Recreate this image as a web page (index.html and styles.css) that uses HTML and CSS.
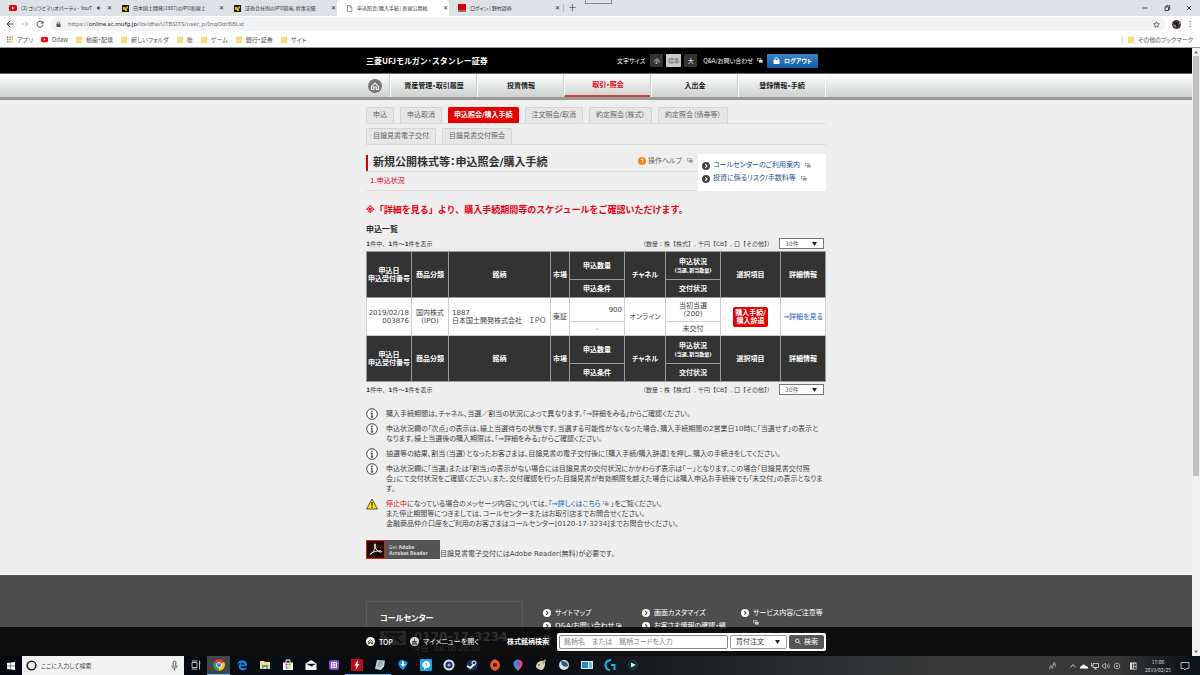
FILE: index.html
```html
<!DOCTYPE html>
<html lang="ja">
<head>
<meta charset="utf-8">
<title>申込照会/購入手続 | 新規公開株式等</title>
<link rel="stylesheet" href="styles.css">
</head>
<body>
<svg class="defs" aria-hidden="true">
  <symbol id="yt" viewBox="0 0 8 6"><rect width="8" height="6" rx="1.6" fill="#e00"/><path d="M3 1.6v2.8L5.5 3z" fill="#fff"/></symbol>
  <symbol id="fav" viewBox="0 0 7 7"><rect width="7" height="7" fill="#181800"/><path d="M1 2h2l.5 1L5 1.5h1V3L4.500 4l.8 2H3.500L2.500 4.500 1 5.500z" fill="#d8d000"/></symbol>
  <symbol id="folder" viewBox="0 0 6 7"><path d="M0 .5h5.500V2H6v5H0z" fill="#f7dc83"/><path d="M5 .5h.7v3H5z" fill="#e8c35d"/></symbol>
  <symbol id="pop" viewBox="0 0 6 5"><rect x=".3" y=".3" width="3.600" height="2.600" fill="none" stroke="currentColor" stroke-width=".6"/><rect x="2" y="1.800" width="3.600" height="2.800" fill="currentColor"/></symbol>
  <symbol id="house" viewBox="0 0 14 14"><circle cx="7" cy="7" r="7" fill="currentColor"/><path d="M3.500 7.500 7 4l3.500 3.500V10.500H8.300V8H5.700v2.500H3.500z" fill="none" stroke="var(--cut)" stroke-width="1.200"/></symbol>
  <symbol id="arrow" viewBox="0 0 8 8"><circle cx="4" cy="4" r="4" fill="currentColor"/><path d="M3.200 2.200 5 4 3.200 5.800" fill="none" stroke="var(--cut)" stroke-width="1.100"/></symbol>
  <symbol id="info" viewBox="0 0 12 12"><circle cx="6" cy="6" r="5.300" fill="#fff" stroke="#333" stroke-width=".9"/><path d="M6 5v4M4.900 5.200H6M4.800 9h2.400" stroke="#222" fill="none"/><circle cx="6" cy="3.200" r=".8" fill="#222"/></symbol>
</svg>

<header class="browser">
  <div class="tabs">
    <div class="tab"><svg class="ic8"><use href="#yt"/></svg><span class="tab-title">(2) ゴリラとマリオパーティ - YouT</span><svg class="ic5" viewBox="0 0 5 5"><path d="M0 1.500h1L2.500 0v5L1 3.500H0zM3.500 1.200q1 1.300 0 2.600" fill="#555"/></svg><button class="x" aria-label="閉じる">✕</button></div>
    <div class="tab"><svg class="ic7"><use href="#fav"/></svg><span class="tab-title">日本国土開発(1887)のIPO新規上</span><button class="x" aria-label="閉じる">✕</button></div>
    <div class="tab"><svg class="ic7"><use href="#fav"/></svg><span class="tab-title">証券会社別のIPO割当、幹事実績</span><button class="x" aria-label="閉じる">✕</button></div>
    <div class="tab current"><svg class="ic7" viewBox="0 0 7 7"><path d="M1.500.5h2.700L5.800 2v4.600H1.500zM4 .5v1.700h1.800" fill="#fff" stroke="#555" stroke-width=".6"/></svg><span class="tab-title">申込照会/購入手続 | 新規公開株</span><button class="x" aria-label="閉じる">✕</button></div>
    <div class="tab last"><svg class="ic8" viewBox="0 0 8 8"><path d="M0 0h8v6H0z" fill="#d00000"/><path d="M0 6h8v2H0z" fill="#8c7770"/></svg><span class="tab-title">ログイン | 野村證券</span><button class="x" aria-label="閉じる">✕</button></div>
    <button class="plus" aria-label="新しいタブ">＋</button>
    <i class="handle"></i>
    <div class="win">
      <svg viewBox="0 0 8 8"><path d="M1.500 4h5" stroke="#222" stroke-width=".8"/></svg>
      <svg viewBox="0 0 8 8"><path d="M2 3h3.500v3.500H2zM3.200 3V1.700h3.500v3.600H5.500" fill="none" stroke="#222" stroke-width=".8"/></svg>
      <svg viewBox="0 0 8 8"><path d="m2 2 4 4M6 2 2 6" stroke="#222" stroke-width=".8"/></svg>
    </div>
  </div>
  <div class="toolbar">
    <svg class="nav-ic" viewBox="0 0 8 8"><path d="M7.500 4H1M4 1 1 4l3 3" fill="none" stroke="#444"/></svg>
    <svg class="nav-ic" viewBox="0 0 8 8"><path d="M.5 4H7M4 1l3 3-3 3" fill="none" stroke="#bbb"/></svg>
    <svg class="nav-ic" viewBox="0 0 8 8"><path d="M6.500 2.500A3 3 0 1 0 7 4.500" fill="none" stroke="#444"/><path d="M7.400.7v2.800H4.600z" fill="#444"/></svg>
    <div class="address">
      <svg class="ic5" viewBox="0 0 5 6"><path d="M.5 2.500h4V6h-4z" fill="#555"/><path d="M1.400 2.500V1.300q1.100-1.300 2.200 0v1.200" fill="none" stroke="#555" stroke-width=".7"/></svg>
      <span>https://<b>online.sc.mufg.jp</b>/its/dfw/UTBSITS/user_p/InqOdrBBLst</span>
      <svg class="ic7 star" viewBox="0 0 8 8"><path d="m4 .8.9 2.200 2.400.2-1.800 1.600.5 2.400-2-1.300-2 1.300.5-2.400L.7 3.200l2.400-.2z" fill="none" stroke="#444" stroke-width=".8"/></svg>
    </div>
    <svg class="avatar" viewBox="0 0 8 8"><circle cx="4" cy="4" r="4" fill="#4a3f49"/><path d="M1 2h5l1 1-2 .5L6 6H3z" fill="#201c24"/><path d="m1 5 2-1 .5 2zM6 1l1.500 2-1 .5z" fill="#b9aeb9"/></svg>
    <svg class="dots" viewBox="0 0 4 8"><path d="M1.500 1h1v1h-1zM1.500 3.500h1v1h-1zM1.500 6h1v1h-1z" fill="#555"/></svg>
  </div>
  <nav class="bookmarks">
    <a href="#"><svg class="ic6" viewBox="0 0 6 6"><path d="M0 0h1.400v1.400H0z" fill="#e44"/><path d="M2.300 0h1.400v1.400H2.300zM4.600 0H6v1.400H4.600z" fill="#e66"/><path d="M0 2.300h1.400v1.400H0zM0 4.600h1.400V6H0z" fill="#4a5"/><path d="M2.300 2.300h1.400v1.400H2.300z" fill="#48d"/><path d="M4.600 2.300H6v1.400H4.600zM2.300 4.600h1.400V6H2.300zM4.600 4.600H6V6H4.600z" fill="#eb3"/></svg>アプリ</a>
    <a href="#"><svg class="ic7"><use href="#yt"/></svg>Ddaw</a>
    <a href="#"><svg class="ic6"><use href="#folder"/></svg>動画・配信</a>
    <a href="#"><svg class="ic6"><use href="#folder"/></svg>新しいフォルダ</a>
    <a href="#"><svg class="ic6"><use href="#folder"/></svg>後</a>
    <a href="#"><svg class="ic6"><use href="#folder"/></svg>ゲーム</a>
    <a href="#"><svg class="ic6"><use href="#folder"/></svg>銀行・証券</a>
    <a href="#"><svg class="ic6"><use href="#folder"/></svg>サイト</a>
    <a href="#" class="others"><svg class="ic6"><use href="#folder"/></svg>その他のブックマーク</a>
  </nav>
</header>

<div class="viewport">
  <div class="page">
    <div class="masthead"><div class="wrap mast-row">
      <div class="brand">三菱UFJモルガン･スタンレー証券</div>
      <span class="size-label">文字サイズ</span>
      <button class="size">小</button><button class="size on">標準</button><button class="size">大</button>
      <a class="qa" href="#">Q&amp;A/お問い合わせ<svg class="pop"><use href="#pop"/></svg></a>
      <button class="logout"><svg class="ic7" viewBox="0 0 6 7"><path d="M0 3h6v4H0z" fill="#fff"/><path d="M1.300 3V1.700q1.700-2 3.400 0V3" fill="none" stroke="#fff"/></svg>ログアウト</button>
    </div></div>
    <nav class="gnav"><div class="wrap gnav-row">
      <a class="home" href="#" aria-label="ホーム"><svg><use href="#house"/></svg></a>
      <a href="#">資産管理・取引履歴</a><a href="#">投資情報</a><a href="#" class="on">取引・照会</a><a href="#">入出金</a><a href="#">登録情報・手続</a>
    </div></nav>

    <main class="wrap">
      <nav class="subtabs"><a href="#">申込</a><a href="#">申込取消</a><a href="#" class="on">申込照会/購入手続</a><a href="#">注文照会/取消</a><a href="#">約定照会（株式）</a><a href="#">約定照会（債券等）</a></nav>
      <nav class="subtabs"><a href="#">目論見書電子交付</a><a href="#">目論見書交付照会</a></nav>

      <div class="top">
        <div class="heading">
          <div class="title-row"><h1>新規公開株式等：申込照会/購入手続</h1>
            <a class="help" href="#"><svg class="ic8" viewBox="0 0 8 8"><circle cx="4" cy="4" r="4" fill="#f08519"/><path d="M2.800 3q.2-1.200 1.300-1.100T5.200 3.100Q5 3.800 4.100 4.300v.6M4.100 5.600v.8" fill="none" stroke="#fff" stroke-width=".8"/></svg>操作ヘルプ<svg class="pop"><use href="#pop"/></svg></a></div>
          <div class="step">1.申込状況</div>
        </div>
        <div class="side">
          <a href="#"><svg class="ic8"><use href="#arrow"/></svg>コールセンターのご利用案内<svg class="pop"><use href="#pop"/></svg></a>
          <a href="#"><svg class="ic8"><use href="#arrow"/></svg>投資に係るリスク/手数料等<svg class="pop"><use href="#pop"/></svg></a>
        </div>
      </div>

      <p class="notice">※「詳細を見る」より、購入手続期間等のスケジュールをご確認いただけます。</p>
      <h2>申込一覧</h2>
      <div class="pager"><span><b>1</b>件中、<b>1</b>件～<b>1</b>件を表示</span><label for="n1">（数量：株【株式】, 千円【CB】, 口【その他】）</label><select id="n1"><option>30件</option></select></div>
      <table>
        <colgroup><col class="c45"><col class="c37"><col class="c102"><col class="c19"><col class="c55"><col class="c41"><col class="c55"><col class="c60"><col class="c45"></colgroup>
        <thead>
          <tr class="h1r"><th rowspan="2">申込日<br>申込受付番号</th><th rowspan="2">商品分類</th><th rowspan="2">銘柄</th><th rowspan="2">市場</th><th>申込数量</th><th rowspan="2">チャネル</th><th>申込状況<br><small>(当選、割当数量)</small></th><th rowspan="2">選択項目</th><th rowspan="2">詳細情報</th></tr>
          <tr class="h2r"><th>申込条件</th><th>交付状況</th></tr>
        </thead>
        <tbody>
          <tr class="d1r"><td rowspan="2" class="r">2019/02/18<br>003876</td><td rowspan="2">国内株式<br>(IPO)</td><td rowspan="2" class="l">1887<br>日本国土開発株式会社　ＩＰＯ</td><td rowspan="2">東証</td><td class="r">900</td><td rowspan="2">オンライン</td><td>当初当選<br>(200)</td><td rowspan="2"><button class="buy">購入手続/<br>購入辞退</button></td><td rowspan="2"><a href="#">⇒詳細を見る</a></td></tr>
          <tr class="d2r"><td>-</td><td>未交付</td></tr>
        </tbody>
        <tbody>
          <tr class="h1r"><th rowspan="2">申込日<br>申込受付番号</th><th rowspan="2">商品分類</th><th rowspan="2">銘柄</th><th rowspan="2">市場</th><th>申込数量</th><th rowspan="2">チャネル</th><th>申込状況<br><small>(当選、割当数量)</small></th><th rowspan="2">選択項目</th><th rowspan="2">詳細情報</th></tr>
          <tr class="h2r"><th>申込条件</th><th>交付状況</th></tr>
        </tbody>
      </table>
      <div class="pager"><span><b>1</b>件中、<b>1</b>件～<b>1</b>件を表示</span><label for="n2">（数量：株【株式】, 千円【CB】, 口【その他】）</label><select id="n2"><option>30件</option></select></div>

      <ul class="notes">
        <li><svg><use href="#info"/></svg><p>購入手続期間は、チャネル、当選／割当の状況によって異なります。「⇒詳細をみる」からご確認ください。</p></li>
        <li><svg><use href="#info"/></svg><p>申込状況欄の「次点」の表示は、繰上当選待ちの状態です。当選する可能性がなくなった場合、購入手続期間の2営業日10時に「当選せず」の表示と<br>なります。繰上当選後の購入期限は、「⇒詳細をみる」からご確認ください。</p></li>
        <li><svg><use href="#info"/></svg><p>抽選等の結果、割当（当選）となったお客さまは、目論見書の電子交付後に［購入手続/購入辞退］を押し、購入の手続きをしてください。</p></li>
        <li><svg><use href="#info"/></svg><p>申込状況欄に「当選」または「割当」の表示がない場合には目論見書の交付状況にかかわらず表示は「－」となります。この場合「目論見書交付照<br>会」にて交付状況をご確認ください。また、交付確認を行った目論見書が有効期限を越えた場合には購入申込お手続後でも「未交付」の表示となりま<br>す。</p></li>
        <li><svg viewBox="0 0 12 12"><path d="M6 1 11.500 11H.5z" fill="#fd0" stroke="#333" stroke-width=".8"/><path d="M6 4v3.800M6 8.800v1.200" stroke="#222" stroke-width="1.200"/></svg><p><em>停止中</em>になっている場合のメッセージ内容については、「<a href="#">⇒詳しくはこちら</a><svg class="pop"><use href="#pop"/></svg>」をご覧ください。<br>また停止期間等につきましては、コールセンターまたはお取引店までお問合せください。<br>金融商品仲介口座をご利用のお客さまはコールセンター[0120-17-3234]までお問合せください。</p></li>
      </ul>
      <div class="adobe">
        <a href="#" class="reader"><svg viewBox="0 0 18 18"><path d="M0 0h18v18H0z" fill="#c32a1c"/><path d="M1 1h16v16H1z" fill="#250806"/><path d="M4 13.500c2-.8 5-4.500 5-9 0-1.500-1.500-1-1 .8.800 3 3 5.700 5.700 6.100 1.500.2 1.300-1 0-1.100-3-.2-7 .9-9 2.500-.7.500-.9.800-.7.700z" fill="none" stroke="#fff" stroke-width=".9"/></svg><span>Get <b>Adobe<br>Acrobat Reader</b></span></a>
        <p>目論見書電子交付にはAdobe Reader(無料)が必要です。</p>
      </div>
    </main>

    <footer class="foot"><div class="wrap foot-row">
      <section class="call"><h3>コールセンター</h3>
        <div class="phone"><svg viewBox="0 0 26 14"><path d="M0 0h26v14H0z" fill="#ccc"/><path d="m4 2 7 5-7 5M22 2l-7 5 7 5M9 2q4 4 8 0" stroke="#555" fill="none" stroke-width="2"/></svg>0120-17-3234</div>
        <p>平日　08：00-20：00</p></section>
      <ul><li><svg><use href="#arrow"/></svg><a href="#">サイトマップ</a></li><li><svg><use href="#arrow"/></svg><a href="#">Q&amp;A/お問い合わせ <svg class="pop"><use href="#pop"/></svg></a></li><li><svg><use href="#arrow"/></svg><a href="#">用語集</a></li></ul>
      <ul><li><svg><use href="#arrow"/></svg><a href="#">画面カスタマイズ</a></li><li><svg><use href="#arrow"/></svg><a href="#">お客さま情報の確認・編</a></li></ul>
      <ul><li><svg><use href="#arrow"/></svg><a href="#">サービス内容/ご注意等<br><svg class="pop"><use href="#pop"/></svg></a></li><li><svg><use href="#arrow"/></svg><a href="#">お取引に関するご注意</a></li></ul>
    </div></footer>
  </div>

  <div class="dock"><div class="wrap dock-row">
    <a href="#" class="totop"><svg class="ic9"><use href="#house"/></svg>TOP</a>
    <a href="#" class="mymenu"><svg class="ic9" viewBox="0 0 9 9"><circle cx="4.500" cy="4.500" r="4.500" fill="#ddd"/><path d="M4.500 1.500v2.500M2 7.200 4.500 3.500 7 7.200zM2 4.500h5" stroke="#333" stroke-width=".8" fill="#777"/></svg>マイメニューを開く</a>
    <label for="q">株式銘柄検索</label>
    <form class="search"><input id="q" type="text" placeholder="銘柄名　または　銘柄コードを入力"><select aria-label="注文種別"><option>買付注文</option></select><button type="button"><svg class="ic6" viewBox="0 0 6 6"><circle cx="2.300" cy="2.300" r="1.800" fill="none" stroke="#fff" stroke-width=".8"/><path d="m3.700 3.700 2 2" stroke="#fff" stroke-width=".9"/></svg>検索</button></form>
  </div></div>
  <div class="scrollbar"><span>▲</span><i></i><span>▼</span></div>
</div>

<footer class="taskbar">
  <button class="start" aria-label="スタート"><svg viewBox="0 0 8 8"><path d="M0 1.100 3.600.6v3.100H0zM4 .5 8 0v3.700H4zM0 4.200h3.600v3.200L0 6.900zM4 4.200h4V8l-4-.6z" fill="#fff"/></svg></button>
  <label class="cortana"><svg viewBox="0 0 10 10"><circle cx="5" cy="5" r="4" fill="none" stroke="#111" stroke-width="1.300"/></svg><input type="text" placeholder="ここに入力して検索" aria-label="検索"><svg viewBox="0 0 10 10"><rect x="3.800" y="1" width="2.400" height="5" rx="1.200" fill="none" stroke="#333" stroke-width=".7"/><path d="M2.500 5q0 2.500 2.500 2.500T7.500 5M5 7.500v2" fill="none" stroke="#333" stroke-width=".7"/></svg></label>
  <div class="apps">
    <span><svg viewBox="0 0 12 12"><path d="M2 3.500h5v5H2zM2 1.500V2h5v-.5M2 10.500V10h5v.5M9.500 1.500v9M9 4h1.500" fill="none" stroke="#ccc" stroke-width=".9"/></svg></span>
    <span class="hot"><svg viewBox="0 0 12 12"><path d="M6 6 1 3a5.800 5.800 0 0 1 10 0z" fill="#e33b2e"/><path d="M6 6 1 3a5.800 5.800 0 0 0 4.500 8.800z" fill="#2da04c"/><path d="M6 6l5-3a5.800 5.800 0 0 1-5.500 8.800z" fill="#fbc91b"/><circle cx="6" cy="6" r="2.700" fill="#fff"/><circle cx="6" cy="6" r="2.100" fill="#3f80ed"/></svg></span>
    <span><svg viewBox="0 0 12 12"><path d="M1 6.200Q1.800 1.200 6.200 1.200q4.600.2 4.800 4.600v1.400H4.600q.6 2 3 2 1.500 0 2.900-.8v2.100q-1.600.8-3.700.8-4-.2-4.200-4 .1-2.200 2.200-3.300Q2.300 4 1 6.200zM4.700 5.500h3.600q-.1-1.700-1.700-1.700-1.600.1-1.900 1.700z" fill="#1483dd"/></svg></span>
    <span><svg viewBox="0 0 12 12"><path d="M1 2h4l1 1h5v7H1z" fill="#fadd7b"/><path d="M3 6h6v4H7.500V8h-3v2H3z" fill="#3b9bdc"/></svg></span>
    <span><svg viewBox="0 0 12 12"><path d="M1 3.500h10V11H1z" fill="#fff"/><path d="M4 3.500V1h4v2.500" fill="none" stroke="#fff"/><path d="M3.500 4.500h2v2h-2z" fill="#e33"/><path d="M6.500 4.500h2v2h-2z" fill="#3a3"/><path d="M3.500 7.500h2v2h-2z" fill="#28d"/><path d="M6.500 7.500h2v2h-2z" fill="#fb0"/></svg></span>
    <span><svg viewBox="0 0 12 12"><path d="M.5 4.500 6 1l5.500 3.500V11H.5z" fill="#fff"/><path d="M1 4.800h10L6.500 7.500z" fill="#111"/></svg></span>
    <span><svg viewBox="0 0 12 12"><rect x="1" y="1" width="10" height="10" rx="2" fill="#7e4fc3"/><path d="M3.500 3.500h5v5h-5zM6 3v6M3 6h6" fill="none" stroke="#fff" stroke-width=".9"/></svg></span>
    <span class="open"><svg viewBox="0 0 12 12"><path d="M0 0h12v12H0z" fill="#b51018"/><path d="M7 1 3.500 6.500h2L4.500 11 8.500 5h-2z" fill="#fff"/></svg></span>
    <span class="open"><svg viewBox="0 0 12 12"><path d="m3 1 8 .5-1 6-3 3.500-6-1z" fill="#c5d0d1"/><path d="M4 3h5M3.500 5h5M3 7h4" stroke="#687d81" stroke-width=".8"/></svg></span>
    <span><svg viewBox="0 0 12 12"><path d="M6 11Q.5 7 1.500 3.500T6 1t4.500 2.500T6 11z" fill="#1692e6"/><path d="M5 2.500h2V5h1.500L6 8 3.500 5H5z" fill="#fff"/></svg></span>
    <span><svg viewBox="0 0 12 12"><rect width="12" height="12" rx="1" fill="#16a4ec"/><path d="M6 2q4 0 4 3.500T6 9l-2 2V8.500Q2 7.500 2 5.500T6 2z" fill="#fff"/><path d="m5 4 2 1.500L5.500 7" stroke="#16a4ec" fill="none"/></svg></span>
    <span><svg viewBox="0 0 12 12"><circle cx="6" cy="6" r="5.500" fill="#d9e2f1"/><circle cx="6" cy="6" r="3.600" fill="#26355f"/><circle cx="6" cy="6" r="1.500" fill="#9bb3dd"/></svg></span>
    <span><svg viewBox="0 0 12 12"><circle cx="6" cy="6" r="5.500" fill="#17365d"/><circle cx="8" cy="4" r="2" fill="none" stroke="#fff"/><path d="m1 7 3.500 2L8 5.500" stroke="#fff" stroke-width="1.800" fill="none"/></svg></span>
    <span><svg viewBox="0 0 12 12"><path d="M6 0q5 2 5 6t-5 6q-5-2-5-6t5-6z" fill="#e95729"/><circle cx="6" cy="6" r="2" fill="#34120c"/></svg></span>
    <span><svg viewBox="0 0 12 12"><path d="M6 12Q1 7 1.500 4T6 .5z" fill="#25a6e5"/><path d="M6 12q5-5 4.500-8T6 .5z" fill="#e74a93"/><circle cx="6" cy="4.500" r="2.300" fill="#8055cc"/></svg></span>
    <span><svg viewBox="0 0 12 12"><path d="M1 8q0-5 5-6t4 4-4 5-5-3z" fill="#d3d1bf"/><path d="m7 3 3-3 1 2-3 4z" fill="#bd9d62"/><circle cx="4" cy="6" r="1" fill="#56793f"/></svg></span>
    <span><svg viewBox="0 0 12 12"><circle cx="6" cy="6" r="5" fill="#d8e4ed"/><path d="M3 2q7 0 7 5-3 2-6-1z" fill="#315774"/></svg></span>
    <span><svg viewBox="0 0 12 12"><path d="M0 2h12v8H0z" fill="#d5eef7"/><path d="M1 3h6v6H1z" fill="#238dc2"/><path d="M8 4h3M8 6h3M8 8h3" stroke="#238dc2"/></svg></span>
    <span><svg viewBox="0 0 12 12"><path d="M7 1Q1.500 1.500 1.500 6T6 11M7 6h3.500v5" fill="none" stroke="#10b5eb" stroke-width="2"/></svg></span>
    <span><svg viewBox="0 0 12 12"><circle cx="6" cy="6" r="4.500" fill="#15272e" stroke="#284650"/><path d="m4 3.500 5 2.500-5 2.500z" fill="#bff"/></svg></span>
  </div>
  <div class="tray">
    <svg class="people" viewBox="0 0 10 10"><path d="M1 9.500V6h3v3M2.500 3.500v2M5 7V3h3v3.500" fill="none" stroke="#ccc" stroke-width=".8"/><circle cx="6.500" cy="1.500" r="1" fill="none" stroke="#ccc" stroke-width=".8"/></svg>
    <svg viewBox="0 0 8 8"><path d="m1.500 5.500 2.500-3 2.500 3" fill="none" stroke="#ddd" stroke-width=".8"/></svg>
    <svg viewBox="0 0 8 8"><path d="M0 6q0-2 1.800-2Q3 1.500 5 3.500L8 5v1.500H0z" fill="#fff"/></svg>
    <svg viewBox="0 0 8 8"><path d="M2 1.500h5.500v4H2zM3 7h3M4.500 5.500V7M.5 1v3h1.500" fill="none" stroke="#ddd" stroke-width=".8"/></svg>
    <svg viewBox="0 0 8 8"><path d="M.5 3h1L3.500 1v6L1.500 5h-1zM5 2.500q1 1.500 0 3M6.500 1.500q1.800 2.500 0 5" fill="none" stroke="#ccc" stroke-width=".7"/></svg>
    <svg viewBox="0 0 8 8"><circle cx="4" cy="4" r="2.800" fill="none" stroke="#bbb" stroke-width=".8"/><path d="m3 3 2 2M5 3 3 5" stroke="#bbb" stroke-width=".7"/></svg>
    <svg class="ime" viewBox="0 0 8 8"><path d="M1 .5h6.500v7H1z" fill="#ddd"/><path d="M3.500 1.500v5M5 2h1.500v1.500H5zM5 5h1.500v1.500H5z" stroke="#222" fill="none" stroke-width=".8"/></svg>
    <time>17:06<br>2019/02/25</time>
    <svg class="msg" viewBox="0 0 10 10"><path d="M1 1.500h8v6H6.500L5 9 3.500 7.500H1z" fill="none" stroke="#ddd" stroke-width=".8"/></svg>
  </div>
</footer>
</body>
</html>
```
FILE: styles.css
```css
* { box-sizing: border-box; }
html, body { height: 100%; }
body {
  margin: 0;
  display: flex;
  flex-direction: column;
  overflow: hidden;
  font: 7px/10px "DejaVu Sans", "Noto Sans CJK JP", sans-serif;
  font-feature-settings: "palt";
  color: #444;
  background: #eee;
}
a { color: inherit; text-decoration: none; }
button, input, select { font: inherit; color: inherit; margin: 0; padding: 0; border: 0; background: none; }
h1, h2, h3, p, ul { margin: 0; padding: 0; }
ul { list-style: none; }
svg { flex: none; display: block; }
.defs { position: absolute; width: 0; height: 0; }
.ic5 { width: 5px; height: 6px; }
.ic6 { width: 6px; height: 7px; }
.ic7 { width: 7px; height: 7px; }
.ic8 { width: 8px; height: 8px; }
.ic9 { width: 9px; height: 9px; }
.pop { width: 6px; height: 5px; color: #999; }

/* browser frame */
.browser { flex: none; font-family: "Noto Sans CJK JP", sans-serif; font-size: 6px; color: #555; background: #fff; border-bottom: 1px solid #999; }
.tabs { display: flex; align-items: center; height: 16px; padding-left: 1px; background: #dee1e6; }
.tab { display: flex; align-items: center; gap: 4px; width: 112px; height: 16px; padding: 0 1px 0 8px; }
.tab + .tab { padding-left: 9px; }
.tab.current { background: #fff; border-radius: 3px 3px 0 0; }
.tab-title { flex: 1; white-space: nowrap; font-size: 5px; color: #333; }
.x { font-size: 6px; line-height: 8px; width: 6px; color: #333; }
.plus { width: 18px; font-size: 9px; border-left: 1px solid #bbb; line-height: 8px; color: #333; margin-left: 2px; }
.handle { width: 27px; height: 4px; border: 1px solid #888; border-top: 0; align-self: flex-start; margin-left: 4px; }
.win { display: flex; gap: 14px; margin-left: auto; padding-right: 7px; }
.win svg { width: 8px; height: 8px; }
.toolbar { display: flex; align-items: center; gap: 7px; height: 16px; padding: 0 8px 0 6px; }
.nav-ic { width: 8px; height: 8px; }
.address { flex: 1; display: flex; align-items: center; gap: 7px; height: 14px; padding: 0 5px; border-radius: 7px; background: #f1f3f4; font: 6px/10px "Noto Sans", sans-serif; color: #777; }
.address b { font-weight: 400; color: #222; }
.star { margin-left: auto; }
.avatar { width: 9px; height: 9px; }
.dots { width: 4px; height: 8px; }
.bookmarks { display: flex; align-items: center; gap: 8px; height: 15px; padding: 0 7px; }
.bookmarks a { display: flex; align-items: center; gap: 4px; }
.bookmarks .others { margin-left: auto; padding-left: 5px; border-left: 1px solid #ddd; line-height: 8px; }

/* site */
.viewport { position: relative; flex: 1; min-height: 0; display: flex; overflow: hidden; }
.page { flex: 1; min-width: 0; height: 100%; overflow: hidden; white-space: nowrap; }
.wrap { width: 460px; margin: 0 auto; }
.masthead { background: #000; color: #fff; border-bottom: 1px solid #666; }
.mast-row { display: flex; align-items: center; height: 25px; gap: 3px; font-size: 6px; font-family: "Noto Sans CJK JP", sans-serif; }
.brand { flex: 1; font-size: 8px; font-weight: 700; font-feature-settings: normal; }
.size-label { margin-right: 2px; }
.size { min-width: 13px; height: 13px; background: #333; border-radius: 1px; }
.size.on { width: 15px; background: #ccc; color: #666; }
.qa { display: flex; align-items: center; gap: 4px; margin-left: 3px; }
.qa .pop { color: #ddd; }
.logout { display: flex; align-items: center; justify-content: center; gap: 4px; width: 51px; height: 14px; margin: 0 8px 0 1px; border-radius: 1px; background: linear-gradient(#3f85c4, #115da8); font-weight: 700; }
.gnav { background: linear-gradient(#fff, #ccd0ce); border-bottom: 3px solid #9a9a9a; }
.gnav-row { display: flex; height: 23px; color: #222; font-weight: 700; }
.gnav-row a { flex: 1; display: flex; align-items: center; justify-content: center; border-left: 1px solid #fff; box-shadow: -1px 0 #ccc; }
.gnav-row a:last-child { border-right: 1px solid #fff; }
.gnav-row .home { flex: 0 0 24px; border: 0; box-shadow: none; justify-content: flex-start; padding-left: 2px; color: #777; --cut: #eee; }
.home svg { width: 14px; height: 14px; }
.gnav-row .on { color: #e60012; border-bottom: 2px solid #d0403c; }
.subtabs { display: flex; gap: 6px; margin-top: 4px; border-bottom: 1px solid #ddd; }
.subtabs:first-child { margin-top: 7px; }
.subtabs a { height: 16px; padding: 0 6px; line-height: 15px; color: #666; border: 1px solid #d5d5d5; border-bottom: 0; border-radius: 2px 2px 0 0; background: #e6e6e6; }
.subtabs .on { padding: 0 5px; color: #fff; font-weight: 700; background: #e60000; border-color: #e60000; }
.top { display: flex; margin-top: 9px; gap: 1px; }
.heading { flex: 1; }
.title-row { display: flex; align-items: center; justify-content: space-between; height: 18px; padding-right: 4px; border-bottom: 1px solid #ddd; }
h1 { padding-left: 5px; font-size: 11px; line-height: 16px; color: #333; border-left: 2px solid #d00010; }
.help { display: flex; align-items: center; gap: 2px; padding-bottom: 4px; color: #666; }
.help .pop { margin-left: 3px; }
.step { padding-left: 4px; line-height: 18px; color: #e60020; border-bottom: 1px solid #ddd; }
.side { width: 128px; height: 37px; padding: 5px 4px; background: #fff; color: #1a5091; }
.side a { display: flex; align-items: center; gap: 3px; line-height: 13px; }
.side .ic8 { color: #444; --cut: #fff; }
.side .pop { margin-left: 2px; }
.notice { margin-top: 12px; font-size: 9px; line-height: 14px; font-weight: 700; font-feature-settings: normal; color: #e60012; }
h2 { margin-top: 7px; font-size: 8px; line-height: 12px; color: #333; }
.pager { display: flex; align-items: center; height: 15px; padding-right: 2px; font-size: 6px; font-feature-settings: normal; gap: 6px; }
.pager span { flex: 1; }
.pager select { width: 45px; height: 11px; }
select { appearance: none; padding: 0 5px; border: 1px solid #777; color: #666; background: #fff url("data:image/svg+xml,%3Csvg xmlns='http://www.w3.org/2000/svg' width='5' height='4'%3E%3Cpath d='M0 0h5L2.500 4z' fill='%23222'/%3E%3C/svg%3E") no-repeat right 6px center; }
table { width: 100%; table-layout: fixed; border-collapse: collapse; line-height: 8px; background: #fff; }
.c19 { width: 19px; } .c37 { width: 37px; } .c41 { width: 41px; } .c45 { width: 45px; } .c55 { width: 55px; } .c60 { width: 60px; } .c102 { width: 102px; }
th, td { padding: 0; border: 1px solid #ccc; text-align: center; }
th { color: #fff; background: #333; border-color: #999; }
small { font-size: 5px; }
.h1r { height: 28px; } .h2r { height: 18px; } .d1r { height: 24px; } .d2r { height: 14px; }
td.r { text-align: right; padding-right: 2px; }
td.l { text-align: left; padding-left: 3px; }
td a, .notes a { color: #1560b0; }
.buy { padding: 2px; border-radius: 2px; background: #e60000; color: #fff; font-weight: 700; line-height: 8px; }
.notes { margin-top: 12px; display: flex; flex-direction: column; gap: 5px; }
.notes li { display: flex; gap: 8px; align-items: flex-start; }
.notes li > svg { width: 12px; height: 12px; margin: -1px 0; }
.notes .pop { display: inline; margin: 0 2px; }
em { font-style: normal; color: #e60020; }
.adobe { display: flex; align-items: flex-end; margin-top: 11px; }
.reader { display: flex; align-items: center; gap: 4px; width: 74px; height: 19px; background: #555; color: #ddd; font: 5px/6px "Open Sans", sans-serif; }
.reader svg { width: 19px; height: 19px; }
.foot { margin-top: 15px; height: 140px; padding-top: 26px; border-top: 1px solid #fff; background: #4d4d4d; color: #fff; }
.foot-row { display: flex; --cut: #4d4d4d; }
.call { flex: none; width: 157px; height: 90px; padding: 11px 13px; border: 1px solid #5c5c5c; margin-right: 20px; }
h3 { font-size: 8px; line-height: 12px; }
.phone { display: flex; align-items: center; gap: 8px; margin-top: 5px; font-size: 12px; line-height: 15px; font-weight: 700; }
.phone svg { width: 26px; height: 14px; }
.call p { padding-left: 34px; line-height: 8px; }
.foot ul { flex: none; width: 99px; padding-top: 7px; }
.foot li { display: flex; gap: 4px; margin-bottom: 3px; }
.foot li > svg { width: 8px; height: 8px; margin-top: 1px; }
.foot a .pop { display: inline; color: #ccc; }
.dock { position: absolute; left: 0; right: 8px; bottom: 0; height: 29px; background: rgba(0, 0, 0, .82); color: #fff; white-space: nowrap; }
.dock-row { display: flex; align-items: center; height: 29px; gap: 17px; --cut: #111; }
.dock a { display: flex; align-items: center; gap: 4px; }
.totop { font-family: "Noto Sans CJK JP", sans-serif; font-weight: 500; }
.dock label { margin-left: auto; font-weight: 700; }
.search { display: flex; gap: 2px; width: 269px; height: 18px; padding: 2px; margin-left: -9px; border-radius: 2px; background: #fff; }
.search input { flex: 1; min-width: 0; padding: 0 4px; border: 1px solid #888; border-radius: 2px; }
.search select { width: 57px; border-radius: 2px; border-color: #999; color: #444; }
.search button { display: flex; align-items: center; justify-content: center; gap: 3px; width: 35px; border-radius: 2px; background: #555; color: #fff; }
::placeholder { color: #888; opacity: 1; }
.scrollbar { width: 8px; display: flex; flex-direction: column; align-items: center; background: #f1f1f1; font-size: 4px; line-height: 8px; color: #666; }
.scrollbar i { width: 6px; flex: 0 0 420px; background: #c1c1c1; }
.scrollbar span:last-child { margin-top: auto; }

/* desktop taskbar */
.taskbar { flex: none; display: flex; height: 19px; color: #ddd; background: linear-gradient(90deg, #05090d 0, #0a0e13 45%, #282b2d 65%, #3a3a3a 80%, #383838 93%, #0e1317 99%); font-family: "Noto Sans CJK JP", sans-serif; }
.start { width: 22px; display: grid; place-items: center; }
.start svg { width: 8px; height: 8px; }
.cortana { display: flex; align-items: center; gap: 4px; width: 162px; padding: 0 4px; background: #f2f2f2; color: #333; font-size: 6px; }
.cortana svg { width: 11px; height: 11px; }
.cortana input { flex: 1; min-width: 0; }
.cortana ::placeholder { color: #444; }
.apps { display: flex; }
.apps span { display: grid; place-items: center; width: 23px; border-bottom: 1px solid transparent; }
.apps svg { width: 12px; height: 12px; }
.apps .hot { background: #43474b; }
.apps .hot, .apps .open { border-color: #76b9ed; }
.tray { display: flex; align-items: center; gap: 3px; margin-left: auto; padding-right: 10px; }
.tray svg { width: 8px; height: 8px; }
.tray .people { margin-right: 9px; }
.tray .ime { margin: 0 5px; }
.tray .msg { width: 10px; height: 10px; margin-left: 6px; }
time { font-size: 5px; line-height: 8px; text-align: center; }
```
